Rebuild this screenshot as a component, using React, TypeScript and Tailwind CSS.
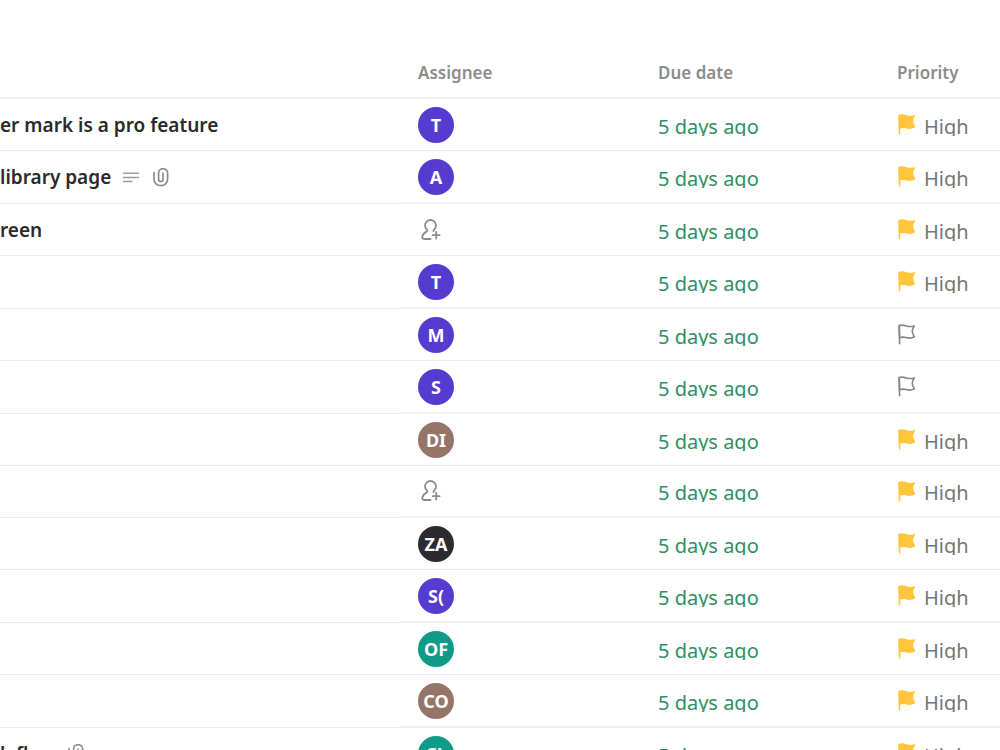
import React from "react";

type Row = {
  title?: string;
  description?: boolean;
  attachment?: boolean;
  assignee?: string;
  color?: string;
  high: boolean;
};

const PURPLE = "bg-[#553bd0]";
const BROWN = "bg-[#957568]";
const BLACK = "bg-[#2b2b2f]";
const TEAL = "bg-[#109a88]";

const rows: Row[] = [
  { title: "er mark is a pro feature", assignee: "T", color: PURPLE, high: true },
  { title: "library page", description: true, attachment: true, assignee: "A", color: PURPLE, high: true },
  { title: "reen", high: true },
  { assignee: "T", color: PURPLE, high: true },
  { assignee: "M", color: PURPLE, high: false },
  { assignee: "S", color: PURPLE, high: false },
  { assignee: "DI", color: BROWN, high: true },
  { high: true },
  { assignee: "ZA", color: BLACK, high: true },
  { assignee: "S(", color: PURPLE, high: true },
  { assignee: "OF", color: TEAL, high: true },
  { assignee: "CO", color: BROWN, high: true },
  { title: "k flow", attachment: true, assignee: "CL", color: TEAL, high: true },
];

const SINGLE_LINE = "[&>td]:border-b [&>td]:border-[#eeeeee]";
const DOUBLE_LINE =
  "[&>td]:border-b-2 [&>td]:border-[#f0f0f0] [&>td:first-child]:border-b [&>td:first-child]:border-[#eeeeee]";

function DescriptionIcon() {
  return (
    <svg width="16" height="11" viewBox="0 0 16 11" fill="none" stroke="#9a9da6" strokeWidth="1.5" aria-hidden="true">
      <path d="M0 1.2h16M0 5.4h16M0 9.6h9.5" />
    </svg>
  );
}

function ClipIcon() {
  return (
    <svg width="16" height="19" viewBox="0 0 16 19" fill="none" stroke="#8c8c8c" strokeWidth="1.7" strokeLinecap="round" aria-hidden="true">
      <path d="M1 4.5v6.800a6.800 6.400 0 0 0 13.600 0V4.900a4.500 4.200 0 0 0-9 0v6.300a2.200 2.300 0 0 0 4.400 0V5.200" />
    </svg>
  );
}

function AddPersonIcon() {
  return (
    <svg width="20" height="22" viewBox="0 0 20 22" fill="none" stroke="#8c8c8c" strokeWidth="1.8" strokeLinecap="round" strokeLinejoin="round" aria-hidden="true">
      <path d="M9.500 20H3.200C1.600 20 1 19 1.400 17.600C2 15 3.500 13.600 5.600 12.600C6.600 12 6.500 11.400 5.700 10.400C4.600 9.200 4 8.200 4 6.500A5.500 5.500 0 0 1 15 6.500C15 8.200 14.400 9.300 13.300 10.400C12.600 11 12.300 11.600 12.500 12.200" />
      <path d="M15.200 12.800v6.800M11.800 16.200h6.800" />
    </svg>
  );
}

function FlagIcon({ filled }: { filled: boolean }) {
  return (
    <svg
      width="18"
      height="21"
      viewBox="0 0 18 21"
      fill={filled ? "#ffc53d" : "none"}
      stroke={filled ? "#ffc53d" : "#858585"}
      strokeWidth="1.6"
      strokeLinecap="round"
      strokeLinejoin="round"
      aria-hidden="true"
    >
      <path d="M1.200 1.500C4 .6 6 1.200 8.500 2C11.500 2.900 13.800 2.700 16.200 1.900C15 4 14.200 5.600 14.300 7.600C14.400 9.500 15.300 11 16.400 12.800C13.500 14.400 11 14.500 8.200 13.600C5.600 12.800 3.600 12.900 1.600 13.900Z" />
      <path d="M1.200 1.500L1.600 19.800" fill="none" />
    </svg>
  );
}

export default function App() {
  return (
    <main className="h-screen overflow-hidden bg-white pt-12 font-['Noto_Sans',sans-serif]">
      <table className="w-full table-fixed border-separate border-spacing-0 text-left">
        <colgroup>
          <col className="w-[40%]" />
          <col className="w-[24%]" />
          <col className="w-[24%]" />
          <col className="w-[12%]" />
        </colgroup>
        <thead>
          <tr className="h-[51px] text-[17px] leading-6 text-[#8c8c8c] [&>*]:border-b-2 [&>*]:border-[#f0f0f0]">
            <td />
            <th scope="col" className="px-[18px] font-semibold">Assignee</th>
            <th scope="col" className="px-[18px] font-semibold">Due date</th>
            <th scope="col" className="pl-[17px] font-semibold">Priority</th>
          </tr>
        </thead>
        <tbody>
          {rows.map((row, i) => (
            <tr
              key={i}
              className={`${i % 2 === 0 ? SINGLE_LINE : DOUBLE_LINE} ${i % 2 === 0 || i === 7 ? "h-[52px]" : "h-[53px]"}`}
            >
              <td className="p-0">
                {row.title && (
                  <div className="flex items-center gap-3 whitespace-nowrap text-[19px] leading-7 font-semibold text-[#2a2a2a]">
                    <span>{row.title}</span>
                    {(row.description || row.attachment) && (
                      <span className="flex items-center gap-[14px]">
                        {row.description && <DescriptionIcon />}
                        {row.attachment && <ClipIcon />}
                      </span>
                    )}
                  </div>
                )}
              </td>
              <td className="px-[18px] py-0">
                {row.assignee ? (
                  <span className={`flex size-9 items-center justify-center rounded-full text-lg font-bold text-white ${row.color}`}>
                    {row.assignee}
                  </span>
                ) : (
                  <button type="button" aria-label="Add assignee" className="flex pl-[3px]">
                    <AddPersonIcon />
                  </button>
                )}
              </td>
              <td className="px-[18px] py-0 text-xl text-[#2f8f62]">
                <div className="h-[22px] overflow-hidden leading-[26px]">5 days ago</div>
              </td>
              <td className="py-0 pl-[18px] text-xl text-[#757575]">
                <div className="flex items-center gap-2">
                  <FlagIcon filled={row.high} />
                  {row.high && <span className="h-[22px] overflow-hidden leading-[26px]">High</span>}
                </div>
              </td>
            </tr>
          ))}
        </tbody>
      </table>
    </main>
  );
}
